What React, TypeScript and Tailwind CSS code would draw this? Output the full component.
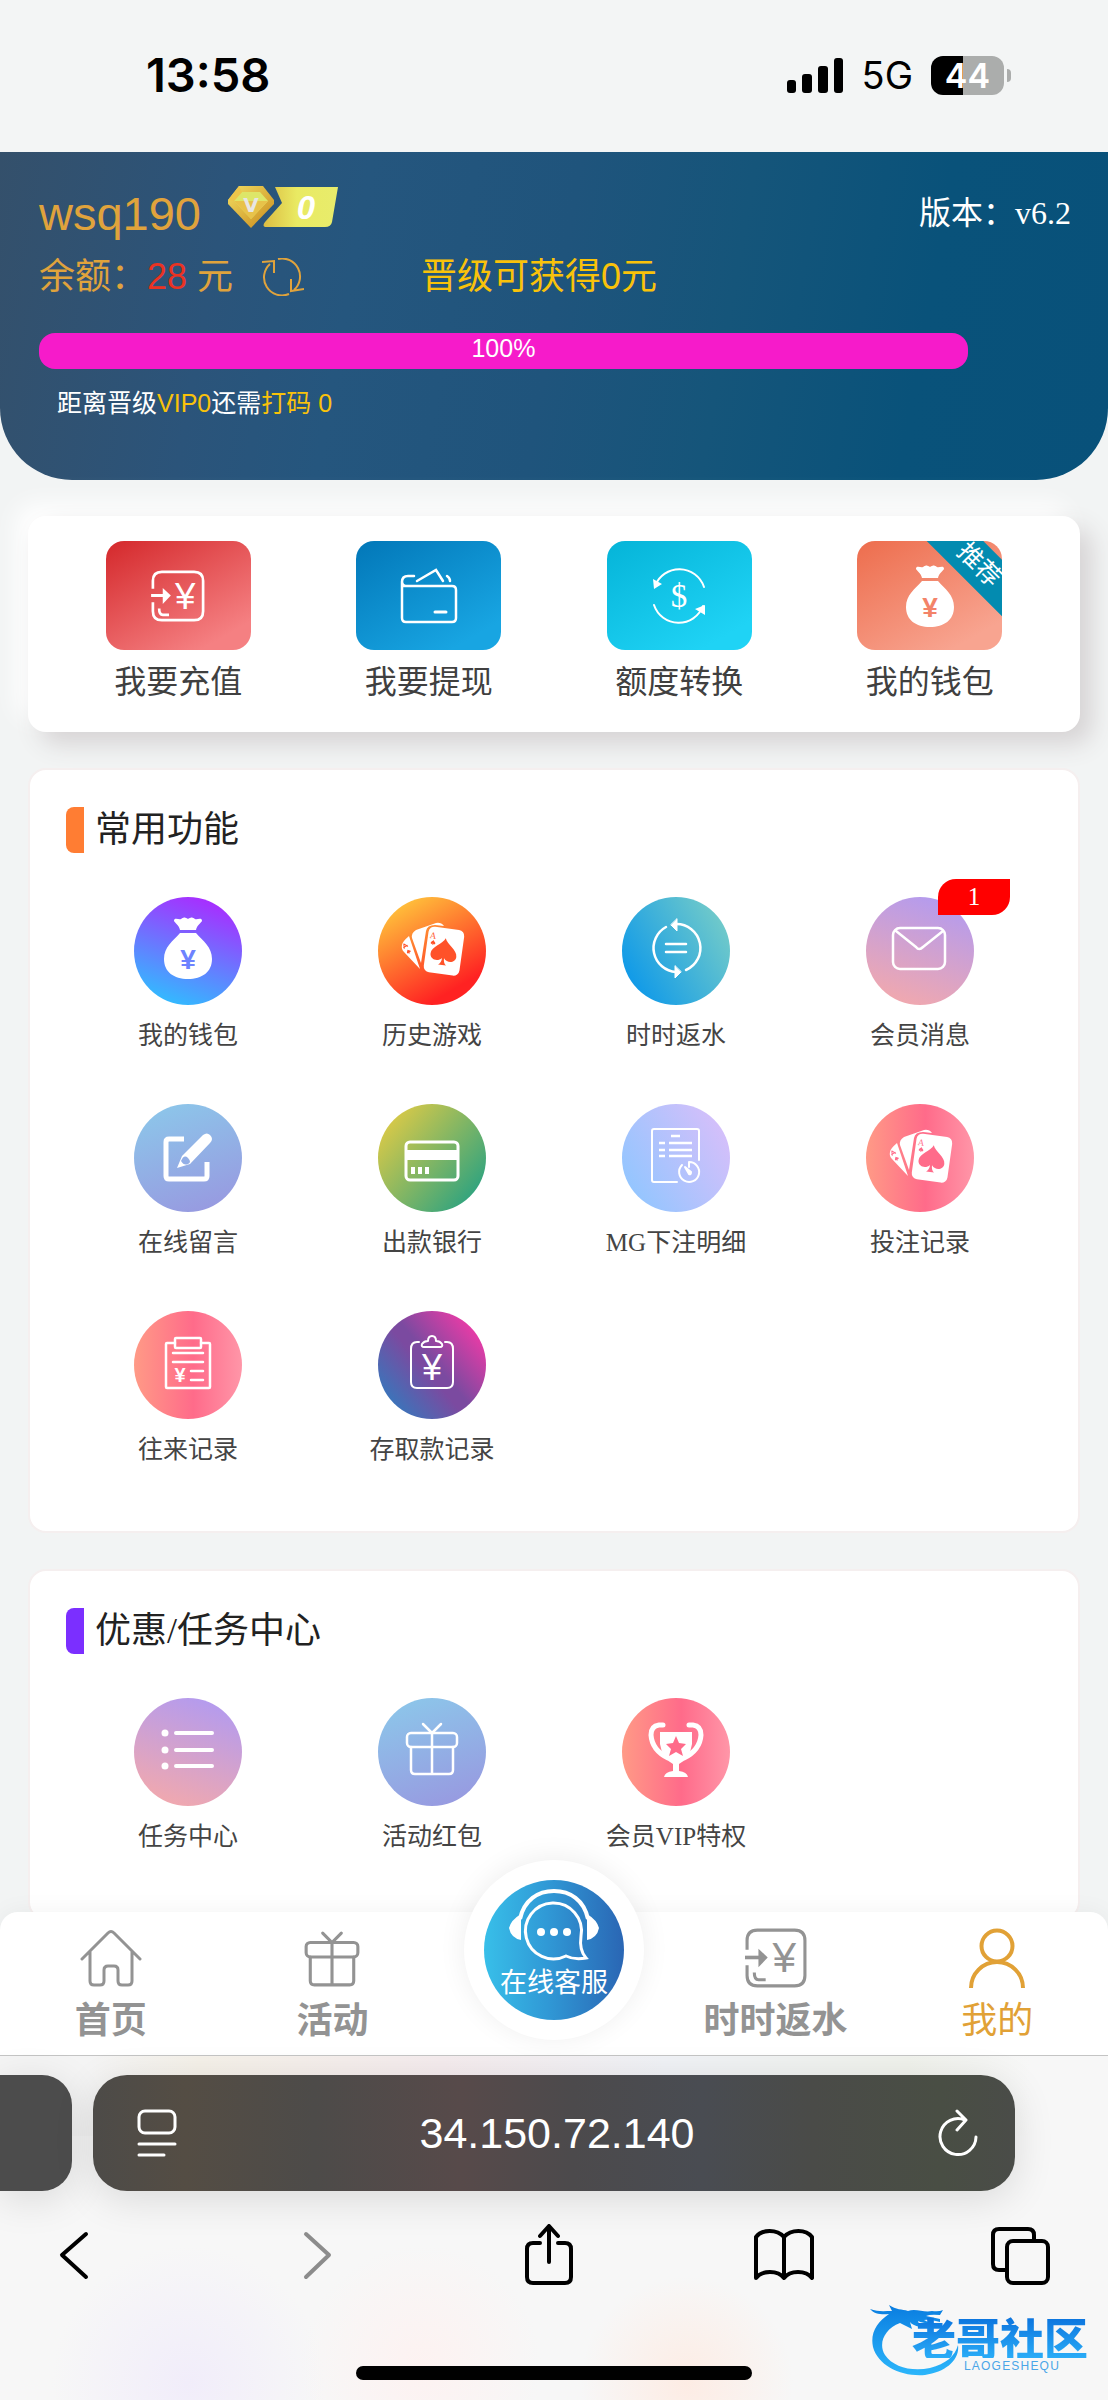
import { ReactNode } from 'react';

interface MenuItem {
  label: string;
  circle: string;
  icon: ReactNode;
  badge?: number;
}

interface ActionItem {
  label: string;
  tile: string;
  icon: ReactNode;
  ribbon?: string;
}

const Bag = ({ ink }: { ink: string }) => (
  <>
    <path
      fill="#fff"
      d="M10 4C10 0 15 3 17 2C19 0 21 0 24 2C27 0 29 0 31 2C33 3 38 0 38 4C37 6 33 8 32 13H16C15 8 11 6 10 4ZM16 16H32C39 24 48 30 48 42C48 55 38 62 24 62S0 55 0 42C0 30 9 24 16 16Z"
    />
    <text x="24" y="52" fontSize="28" fontWeight="700" textAnchor="middle" fill={ink} className="font-['Liberation_Sans',sans-serif]">
      ¥
    </text>
  </>
);

const spade =
  'M0-14C2-8 13-4 13 3C13 9 5 11 1 6C1 9 2 12 4 13H-4C-2 12-1 9-1 6C-5 11-13 9-13 3C-13-4-2-8 0-14Z';

const CircleIcon = ({ children, stroke = 2.5 }: { children: ReactNode; stroke?: number }) => (
  <svg
    viewBox="0 0 108 108"
    className="h-[108px] w-[108px]"
    fill="none"
    stroke="#fff"
    strokeWidth={stroke}
    strokeLinecap="round"
    strokeLinejoin="round"
    aria-hidden="true"
  >
    {children}
  </svg>
);

const BagIcon = ({ ink }: { ink: string }) => (
  <CircleIcon>
    <g transform="translate(30 20)" stroke="none">
      <Bag ink={ink} />
    </g>
  </CircleIcon>
);

const CardsIcon = ({ ink }: { ink: string }) => (
  <CircleIcon>
    <g stroke="none" fill="#fff">
      <path d="M24 48Q24 45 31 39L42 72L26 55Q23 52 24 48Z" />
      <path d="M34 41Q33 36 38 33L58 26Q63 25 66 29L57 28Q49 28 48 34L43 66Z" />
      <g transform="translate(65 54) rotate(8)">
        <rect x="-17" y="-23" width="36" height="46" rx="6" />
        <path d={spade} fill={ink} transform="translate(1 1)" />
        <text x="-12" y="-11" fontSize="9" textAnchor="middle" fill={ink} className="font-['Liberation_Serif',serif]">
          A
        </text>
        <path d={spade} fill={ink} transform="translate(-11 -7) scale(.18)" />
      </g>
      <g transform="translate(29 52) rotate(-32)" fill={ink}>
        <path d="M-2-2L0-6L2-2M-2-3H2" stroke={ink} strokeWidth="1" fill="none" />
        <path d={spade} transform="translate(0 3) scale(.16)" />
      </g>
    </g>
  </CircleIcon>
);

const YenInIcon = ({ className }: { className: string }) => (
  <svg viewBox="0 0 60 58" className={className} fill="none" stroke="currentColor" strokeWidth="3" aria-hidden="true">
    <path d="M2 21V12Q2 2 12 2H48Q58 2 58 12V46Q58 56 48 56H12Q2 56 2 46V36M9 43Q9 50 13 50H20" />
    <path d="M0 28.500H14" strokeWidth="3.500" />
    <path d="M13 20L22 28.500L13 38Z" fill="currentColor" stroke="none" />
    <text
      x="38"
      y="43"
      fontSize="41"
      fontWeight="400"
      textAnchor="middle"
      fill="currentColor"
      stroke="none"
      className="font-['Liberation_Sans',sans-serif]"
    >
      ¥
    </text>
  </svg>
);

const GiftPaths = () => (
  <>
    <rect x="29" y="35" width="50" height="14" rx="4" />
    <path d="M33 49V72Q33 76 37 76H71Q75 76 75 72V49M54 35V76M45 26L54 35L63 26" />
  </>
);

const actions: ActionItem[] = [
  {
    label: '我要充值',
    tile: 'bg-[linear-gradient(150deg,#d4282b,#f58082_85%)]',
    icon: <YenInIcon className="h-[52px] w-[56px] text-white" />,
  },
  {
    label: '我要提现',
    tile: 'bg-[linear-gradient(150deg,#0277b8,#18a5e2_85%)]',
    icon: (
      <svg viewBox="0 0 58 56" className="h-[56px] w-[58px]" fill="none" stroke="#fff" strokeWidth="2.500" strokeLinecap="round" aria-hidden="true">
        <path d="M2 18H52Q56 18 56 22V50Q56 54 52 54H6Q2 54 2 50V14Q2 8 8 8H14M2 13Q2 18 6 18M17 13L36 2L43 13M47 8Q50 10 50 13" />
        <path d="M35 44H46" strokeWidth="3" />
      </svg>
    ),
  },
  {
    label: '额度转换',
    tile: 'bg-[linear-gradient(150deg,#05b4d8,#1fd3f5_85%)]',
    icon: (
      <svg viewBox="0 0 58 58" className="h-[58px] w-[58px]" fill="none" stroke="#fff" strokeWidth="2" strokeLinecap="round" aria-hidden="true">
        <path d="M5 19A26 26 0 0 1 54 20M4 38A26 26 0 0 0 53 39" />
        <path d="M3 12L4 22L12 17ZM55 38V48L45 42Z" fill="#fff" stroke="none" />
        <text x="29" y="40" fontSize="33" textAnchor="middle" fill="#fff" stroke="none" className="font-['Liberation_Serif',serif]">
          $
        </text>
      </svg>
    ),
  },
  {
    label: '我的钱包',
    tile: 'bg-[linear-gradient(150deg,#ed6d4d,#f8a490_85%)]',
    ribbon: '推荐',
    icon: (
      <svg viewBox="0 0 48 62" className="h-[62px] w-[48px]" aria-hidden="true">
        <Bag ink="#f38369" />
      </svg>
    ),
  },
];

const features: MenuItem[] = [
  {
    label: '我的钱包',
    circle: 'bg-[linear-gradient(200deg,#a82dff_10%,#2bc3ff_95%)]',
    icon: <BagIcon ink="#6e82ff" />,
  },
  {
    label: '历史游戏',
    circle: 'bg-[linear-gradient(150deg,#ffc83c_8%,#ff2222_80%)]',
    icon: <CardsIcon ink="#ff5229" />,
  },
  {
    label: '时时返水',
    circle: 'bg-[linear-gradient(60deg,#0a97ea_8%,#73cbc9_90%)]',
    icon: (
      <CircleIcon>
        <path d="M44 30A24 24 0 0 0 54 75M54 27A24 24 0 0 1 64 73" />
        <path d="M44 47H64M44 55H64" />
        <path d="M55 22V34L49 28ZM53 69V81L59 75Z" fill="#fff" strokeWidth="1" />
      </CircleIcon>
    ),
  },
  {
    label: '会员消息',
    circle: 'bg-[linear-gradient(200deg,#b49bee_10%,#f4a9ab_95%)]',
    badge: 1,
    icon: (
      <CircleIcon>
        <rect x="27" y="31" width="52" height="41" rx="7" />
        <path d="M30 34L50 50Q53 54 57 50L77 34" />
      </CircleIcon>
    ),
  },
  {
    label: '在线留言',
    circle: 'bg-[linear-gradient(160deg,#8cc7ea_5%,#9898e0_95%)]',
    icon: (
      <CircleIcon>
        <path d="M50 35H35Q32 35 32 38V72Q32 75 35 75H70Q73 75 73 72V58" strokeWidth="5" strokeLinecap="butt" />
        <path d="M43 64L48 52L69 31Q73 28 76 31Q80 35 76 39L56 60Z" fill="#fff" stroke="none" />
        <path d="M47 57Q50 50 54 54T54 60Q50 62 47 57Z" fill="#92aee6" stroke="none" />
      </CircleIcon>
    ),
  },
  {
    label: '出款银行',
    circle: 'bg-[linear-gradient(130deg,#e1cb45_8%,#2fa37f_88%)]',
    icon: (
      <CircleIcon stroke={3}>
        <rect x="28" y="38" width="52" height="38" rx="4" />
        <path d="M28 46H80V56H28ZM33 63H37V70H33ZM40 63H44V70H40ZM47 63H51V70H47Z" fill="#fff" stroke="none" />
      </CircleIcon>
    ),
  },
  {
    label: 'MG下注明细',
    circle: 'bg-[linear-gradient(60deg,#90c6ff_8%,#d6bffa_90%)]',
    icon: (
      <CircleIcon stroke={2}>
        <path d="M77 56V27Q77 25 75 25H32Q30 25 30 27V76Q30 78 32 78H55" />
        <path d="M49 32H58M37 39H43M47 39H70M37 46H43M47 46H70M37 52H43M47 52H70" strokeWidth="2.500" strokeLinecap="butt" />
        <path d="M60 61A10 10 0 1 0 67 58V63" />
        <path d="M63 63L69 68Q69 71 67 70Z" fill="#fff" />
      </CircleIcon>
    ),
  },
  {
    label: '投注记录',
    circle: 'bg-[linear-gradient(90deg,#ff9a86,#ff6b8a_55%,#ff96a8)]',
    icon: <CardsIcon ink="#ff6b8a" />,
  },
  {
    label: '往来记录',
    circle: 'bg-[linear-gradient(90deg,#ff9a86,#ff6b8a_55%,#ff96a8)]',
    icon: (
      <CircleIcon>
        <path d="M41 32H33Q32 32 32 33V76Q32 77 33 77H75Q76 77 76 76V33Q76 32 75 32H67" />
        <rect x="41" y="27" width="26" height="10" rx="1" />
        <path d="M39 42H69M39 51H69M57 60H69M57 69H69" />
        <text x="46" y="71" fontSize="20" fontWeight="700" textAnchor="middle" fill="#fff" stroke="none" className="font-['Liberation_Sans',sans-serif]">
          ¥
        </text>
      </CircleIcon>
    ),
  },
  {
    label: '存取款记录',
    circle: 'bg-[linear-gradient(50deg,#3479bd_10%,#7b4aa0_45%,#7b4aa0_52%,#e33ca6_85%)]',
    icon: (
      <CircleIcon stroke={2}>
        <path d="M41 31H39Q33 31 33 38V71Q33 77 39 77H69Q75 77 75 71V38Q75 31 69 31H67" />
        <path d="M46 36H62Q65 36 64 33Q62 30 58 30Q58 25 54 25T50 30Q46 30 44 33Q43 36 46 36Z" />
        <text x="54" y="69" fontSize="36" textAnchor="middle" fill="#fff" stroke="none" className="font-['Liberation_Sans',sans-serif]">
          ¥
        </text>
      </CircleIcon>
    ),
  },
];

const promos: MenuItem[] = [
  {
    label: '任务中心',
    circle: 'bg-[linear-gradient(200deg,#b49bee_10%,#f4a9ab_95%)]',
    icon: (
      <CircleIcon>
        <path d="M42 35H78M42 52H78M42 68H78" strokeWidth="4" />
        <g fill="#fff" stroke="none">
          <circle cx="31" cy="35" r="3.500" />
          <circle cx="31" cy="52" r="3.500" />
          <circle cx="31" cy="68" r="3.500" />
        </g>
      </CircleIcon>
    ),
  },
  {
    label: '活动红包',
    circle: 'bg-[linear-gradient(160deg,#8cc7ea_5%,#9898e0_95%)]',
    icon: (
      <CircleIcon>
        <GiftPaths />
      </CircleIcon>
    ),
  },
  {
    label: '会员VIP特权',
    circle: 'bg-[linear-gradient(90deg,#ff9a86,#ff6b8a_55%,#ff96a8)]',
    icon: (
      <CircleIcon>
        <path d="M41 27H37Q29 28 29 37Q30 52 46 60M67 27H71Q79 28 79 37Q78 52 62 60" strokeWidth="5" />
        <path d="M38 34H70V46Q68 60 57 66V73Q65 74 66 79H42Q43 74 51 73V66Q40 60 38 46Z" fill="#fff" stroke="none" />
        <path d="M54 38L57 45L64 46L59 51L61 58L54 54L47 58L49 51L44 46L51 45Z" fill="#ff6b8a" stroke="none" />
      </CircleIcon>
    ),
  },
];

function StatusBar() {
  return (
    <div className="flex items-start justify-between bg-[#f3f5f5] pt-[46px] pr-[97px] pb-[48px] pl-[146px] font-['Inter',sans-serif] text-black">
      <span className="text-[47px] leading-[58px] font-semibold">13:58</span>
      <div className="flex h-[58px] items-center">
        <svg viewBox="0 0 56 35" className="h-[35px] w-[56px]" aria-hidden="true">
          <rect x="0" y="22" width="9" height="13" rx="3" />
          <rect x="15" y="16" width="10" height="19" rx="3" />
          <rect x="31" y="8" width="10" height="27" rx="3" />
          <rect x="47" y="0" width="9" height="35" rx="3" />
        </svg>
        <span className="ml-[19px] text-[38px] leading-[58px]">5G</span>
        <div className="ml-[18px] flex items-center gap-[3px]">
          <span className="flex h-[39px] w-[73px] items-center justify-center rounded-[12px] bg-[linear-gradient(90deg,#000_44%,#abadac_44%)] text-[34px] leading-[39px] font-semibold text-white">
            44
          </span>
          <span className="h-[13px] w-[4px] rounded-r-full bg-[#abadac]" />
        </div>
      </div>
    </div>
  );
}

function VipBadge() {
  return (
    <svg viewBox="0 0 112 43" className="h-[43px] w-[112px]" role="img" aria-label="VIP 0">
      <defs>
        <linearGradient id="vipPlate" x1="0" y1="0" x2="1" y2="0">
          <stop offset="0" stopColor="#dcbc42" />
          <stop offset=".45" stopColor="#e9ea63" />
          <stop offset="1" stopColor="#e8ec6c" />
        </linearGradient>
        <linearGradient id="vipGem" x1="0" y1="0" x2="1" y2="1">
          <stop offset="0" stopColor="#f1dd62" />
          <stop offset="1" stopColor="#c98a1c" />
        </linearGradient>
      </defs>
      <path d="M47 1H110L104 36Q103 41 97 41H37Q34 40 37 36L54 17Z" fill="url(#vipPlate)" />
      <path d="M11 0H35L46 14V18L23 42L0 18V14Z" fill="url(#vipGem)" />
      <path d="M14 6H32L40 15L23 33L6 15Z" fill="#dde668" />
      <path d="M40 15L23 33L6 15Z" fill="#e8c24a" />
      <path d="M11 0L14 6L6 15L0 14Z" fill="#edc64b" />
      <text x="23" y="26" fontSize="20" fontWeight="700" textAnchor="middle" fill="#e8e6e4" className="font-['DejaVu_Sans',sans-serif]">
        V
      </text>
      <text x="78" y="33" fontSize="33" fontWeight="700" fontStyle="italic" textAnchor="middle" fill="#fff" className="font-['Liberation_Sans',sans-serif]">
        0
      </text>
    </svg>
  );
}

function ProfileHeader() {
  return (
    <header className="rounded-b-[72px] bg-[linear-gradient(100deg,#34506b,#2b547a_20%,#25567e_32%,#1f547c_50%,#15557a_65%,#09527a_82%,#08517a)] pt-[34px] pr-[37px] pb-[59px] pl-[39px] font-['Liberation_Sans','Noto_Sans_CJK_SC',sans-serif]">
      <div className="flex items-start">
        <h1 className="text-[47px] leading-[56px] text-[#e0a33c]">wsq190</h1>
        <div className="ml-[27px]">
          <VipBadge />
        </div>
        <span className="ml-auto font-['Liberation_Serif','Noto_Sans_CJK_SC',serif] text-[32px] leading-[54px] text-white">
          版本：v6.2
        </span>
      </div>

      <div className="mt-[11px] flex items-center text-[36px] leading-[48px] text-[#e0a33c]">
        <p>
          余额：<span className="text-[#ea3323]">28</span> 元
        </p>
        <button type="button" aria-label="刷新余额" className="ml-[29px]">
          <svg viewBox="0 0 42 38" className="h-[38px] w-[42px]" fill="none" stroke="currentColor" strokeWidth="2" aria-hidden="true">
            <path d="M16 1A18 18 0 0 1 32 32M27 36A18 18 0 0 1 8 6M0 4L12 3V15M29 21V33L42 31" />
          </svg>
        </button>
        <p className="ml-[117px] text-[#f9c20a]">晋级可获得0元</p>
      </div>

      <div
        role="progressbar"
        aria-label="晋级进度"
        aria-valuenow={100}
        className="mt-[32px] h-9 w-9/10 rounded-[16px] bg-[#f61bca] text-center text-[25px] leading-[30px] text-white"
      >
        100%
      </div>

      <p className="mt-4 pl-[18px] text-[25px] leading-9 text-white">
        距离晋级<span className="text-[#f9c20a]">VIP0</span>还需<span className="text-[#f9c20a]">打码 0</span>
      </p>
    </header>
  );
}

function QuickActions() {
  return (
    <nav className="mx-7 mt-9 grid grid-cols-4 rounded-[18px] bg-white px-[25px] pt-[25px] pb-8 shadow-[12px_12px_24px_#d6d3d4,-12px_-12px_24px_#ffffff]">
      {actions.map((item) => (
        <a key={item.label} href="#" className="flex flex-col items-center">
          <div className={`relative flex h-[109px] w-[145px] items-center justify-center overflow-hidden rounded-[18px] ${item.tile}`}>
            {item.icon}
            {item.ribbon && (
              <span className="absolute top-[4px] left-[52px] w-[140px] rotate-45 bg-[#038bb0] text-center text-[25px] leading-10 text-white">
                {item.ribbon}
              </span>
            )}
          </div>
          <span className="mt-[14px] text-[32px] leading-9 text-[#404040]">{item.label}</span>
        </a>
      ))}
    </nav>
  );
}

function MenuSection({ title, accent, items }: { title: string; accent: string; items: MenuItem[] }) {
  return (
    <section className="mx-7 mt-9 rounded-[18px] border-2 border-[#f5efef] bg-white px-9 pt-[37px] pb-[13px]">
      <div className="flex items-center gap-[11px]">
        <span className={`h-[46px] w-[18px] rounded-l-[8px] ${accent}`} />
        <h2 className="text-[36px] leading-[46px] text-[#222]">{title}</h2>
      </div>
      <div className="mt-11 grid grid-cols-4">
        {items.map((item) => (
          <a key={item.label} href="#" className="flex flex-col items-center pb-[49px]">
            <div className={`relative rounded-full ${item.circle}`}>
              {item.icon}
              {item.badge && (
                <span className="absolute -top-[18px] left-[72px] h-9 w-[72px] rounded-tl-[18px] rounded-br-[18px] bg-[#ff0000] text-center text-[25px] leading-9 text-white">
                  {item.badge}
                </span>
              )}
            </div>
            <span className="mt-3 text-[25px] leading-[38px] text-[#444]">{item.label}</span>
          </a>
        ))}
      </div>
    </section>
  );
}

function TabLink({ label, active, children }: { label: string; active?: boolean; children: ReactNode }) {
  return (
    <a
      href="#"
      className={`flex flex-col items-center pt-4 pb-4 ${active ? 'font-normal text-[#e1a136]' : 'font-bold text-[#939393]'}`}
    >
      {children}
      <span className="mt-[7px] text-[36px] leading-[44px]">{label}</span>
    </a>
  );
}

function TabBar() {
  return (
    <nav className="relative -mt-2 grid grid-cols-5 items-start rounded-t-[18px] bg-white font-['Noto_Sans_CJK_SC',sans-serif] shadow-[0_0_24px_rgba(0,0,0,0.05)]">
      <TabLink label="首页">
        <svg viewBox="0 0 62 60" className="h-[60px] w-[62px]" fill="none" stroke="currentColor" strokeWidth="3" strokeLinecap="round" aria-hidden="true">
          <path d="M2 31L28 5Q31 2 34 5L60 31M10 24V53Q10 57 14 57H20Q24 57 24 53V42Q24 38 28 38H34Q38 38 38 42V53Q38 57 42 57H48Q52 57 52 53V24" />
        </svg>
      </TabLink>
      <TabLink label="活动">
        <svg viewBox="25 21 58 58" className="h-[60px] w-[60px]" fill="none" stroke="currentColor" strokeWidth="3" strokeLinecap="round" aria-hidden="true">
          <GiftPaths />
        </svg>
      </TabLink>
      <a
        href="#"
        className="-mt-[52px] flex h-[180px] w-[180px] items-center justify-center justify-self-center rounded-full bg-white shadow-[0_-2px_28px_rgba(0,0,0,0.07)]"
      >
        <div className="flex h-[140px] w-[140px] flex-col items-center rounded-full bg-[linear-gradient(90deg,#38bfe9,#3099d6_45%,#2a66b4)]">
          <svg viewBox="0 0 140 84" className="h-[84px] w-[140px]" fill="none" stroke="#fff" strokeWidth="3" aria-hidden="true">
            <path d="M36 39C40 20 54 11 70 11S100 20 104 39" strokeWidth="4" />
            <path d="M37 34Q27 40 25 48Q27 58 37 60ZM103 34Q113 40 115 48Q113 58 103 60Z" fill="#fff" stroke="none" />
            <path d="M97 56A28 28 0 1 0 82 76Q90 80 102 78Q95 70 97 56Z" />
            <g fill="#fff" stroke="none">
              <circle cx="57" cy="52" r="4" />
              <circle cx="70" cy="52" r="4" />
              <circle cx="83" cy="52" r="4" />
            </g>
          </svg>
          <span className="text-[27px] leading-[34px] whitespace-nowrap text-white">在线客服</span>
        </div>
      </a>
      <TabLink label="时时返水">
        <YenInIcon className="h-[60px] w-[62px]" />
      </TabLink>
      <TabLink label="我的" active>
        <svg viewBox="0 0 62 60" className="h-[60px] w-[62px]" fill="none" stroke="currentColor" strokeWidth="4" aria-hidden="true">
          <circle cx="31" cy="18" r="15.500" />
          <path d="M5 60A26 26 0 0 1 57 60" />
        </svg>
      </TabLink>
    </nav>
  );
}

const ToolButton = ({ label, className, children }: { label: string; className?: string; children: ReactNode }) => (
  <button type="button" aria-label={label} className={className}>
    <svg
      viewBox="0 0 62 62"
      className="h-[62px] w-[62px]"
      fill="none"
      stroke="currentColor"
      strokeWidth="4"
      strokeLinecap="round"
      strokeLinejoin="round"
      aria-hidden="true"
    >
      {children}
    </svg>
  </button>
);

function SiteLogo() {
  return (
    <div className="absolute right-4 bottom-[24px] h-[74px] w-[222px]" lang="zh-CN">
      <svg viewBox="0 0 222 74" className="h-[74px] w-[222px]" aria-hidden="true">
        <defs>
          <linearGradient id="dragon" x1="0" y1="0" x2="0" y2="1">
            <stop offset="0" stopColor="#0a7de0" />
            <stop offset="1" stopColor="#2cb6fb" />
          </linearGradient>
        </defs>
        <path
          fill="url(#dragon)"
          d="M0 7C8 10 14 9 22 9L19 3C26 8 32 7 38 9C46 6 54 11 62 9Q69 10 73 8L70 13Q60 12 56 14L70 17V20Q58 17 54 18L62 22Q52 21 48 19L50 25Q42 23 40 20L42 27L30 21C14 27 8 42 15 53C23 65 42 70 60 66C76 62 85 54 88 43C90 58 76 70 55 73C32 75 8 64 3 45C0 31 7 20 19 12C12 13 4 12 0 7Z"
        />
      </svg>
      <span className="absolute top-[14px] left-[42px] bg-[linear-gradient(180deg,#0b72dd,#2aacf7)] bg-clip-text font-['Noto_Sans_CJK_SC',sans-serif] text-[44px] leading-[42px] font-black whitespace-nowrap text-transparent">
        老哥社区
      </span>
      <span className="absolute top-[58px] left-[94px] font-['Liberation_Sans',sans-serif] text-[12px] leading-[12px] tracking-widest text-[#4aa6e8]">
        LAOGESHEQU
      </span>
    </div>
  );
}

function BrowserBar() {
  return (
    <footer className="relative border-t border-[#c4c4c4] bg-[#f7f7f7] bg-[radial-gradient(circle_at_17%_95%,#f1edfa,transparent_14%),radial-gradient(circle_at_38%_90%,#fdf2f1,transparent_16%),radial-gradient(circle_at_62%_95%,#fdece4,transparent_14%),linear-gradient(90deg,#f4f4f4_8%,#f5f1e9_18%,#f5ecee_40%,#f0f2f6_60%,#f0f2ec_82%,#f7f7f7_93%)] bg-[length:auto,auto,auto,100%_80px] bg-no-repeat pt-[19px]">
      <div className="flex gap-[21px] pr-[93px]">
        <div className="h-[116px] w-[72px] rounded-r-[30px] bg-[#4c4c4c] shadow-[0_8px_40px_rgba(0,0,0,0.12)]" />
        <div className="flex h-[116px] min-w-0 flex-1 items-center rounded-[34px] bg-[linear-gradient(90deg,#4d4b48,#544d44_10%,#4d4b49_24%,#574a4a_40%,#4c4a4c_52%,#494c52_66%,#4a4b48_78%,#494e44_92%,#4a4c48)] pr-9 pl-11 text-white shadow-[0_8px_40px_rgba(0,0,0,0.12)]">
          <button type="button" aria-label="页面菜单">
            <svg viewBox="0 0 40 48" className="h-[48px] w-[40px]" fill="none" stroke="currentColor" strokeWidth="3" strokeLinecap="round" aria-hidden="true">
              <rect x="2" y="2" width="36" height="22" rx="6" />
              <path d="M2 35H38M2 46H27" />
            </svg>
          </button>
          <input
            type="text"
            aria-label="网址"
            defaultValue="34.150.72.140"
            className="min-w-0 flex-1 bg-transparent text-center font-['Liberation_Sans',sans-serif] text-[43px] leading-[50px] text-white outline-none"
          />
          <button type="button" aria-label="重新载入">
            <svg viewBox="0 0 42 48" className="h-[48px] w-[42px]" fill="none" stroke="currentColor" strokeWidth="3" strokeLinecap="round" strokeLinejoin="round" aria-hidden="true">
              <path d="M28 11A18 18 0 1 0 39 28M20 2L29 11L20 21" />
            </svg>
          </button>
        </div>
      </div>

      <div className="mt-[33px] flex justify-between pr-[57px] pl-[43px] text-black">
        <ToolButton label="后退">
          <path d="M43 10L19 31L43 53" />
        </ToolButton>
        <ToolButton label="前进" className="text-[#8c8c8c]">
          <path d="M26 10L49 31L26 53" />
        </ToolButton>
        <ToolButton label="分享">
          <path d="M24 19H17Q11 19 11 25V53Q11 59 17 59H49Q55 59 55 53V25Q55 19 49 19H42M33 3V38M24 12L33 2L42 12" />
        </ToolButton>
        <ToolButton label="书签">
          <path d="M31 13C24 5 9 5 3 13V54C9 46 25 46 31 54C37 46 53 46 59 54V13C53 5 38 5 31 13V54" />
        </ToolButton>
        <ToolButton label="标签页">
          <path d="M17 46H10Q4 46 4 40V11Q4 5 10 5H39Q45 5 45 11V16" />
          <rect x="18" y="17" width="41" height="42" rx="6" />
        </ToolButton>
      </div>

      <div className="mx-auto mt-[80px] h-[14px] w-[396px] rounded-full bg-black" />
      <div className="h-5" />
      <SiteLogo />
    </footer>
  );
}

export default function App() {
  return (
    <div lang="zh-CN" className="w-full overflow-hidden bg-[#f2f4f4]">
      <StatusBar />
      <ProfileHeader />
      <main className="font-['Liberation_Serif','Noto_Sans_CJK_SC',serif]">
        <QuickActions />
        <MenuSection title="常用功能" accent="bg-[#ff7d33]" items={features} />
        <MenuSection title="优惠/任务中心" accent="bg-[#7b2fff]" items={promos} />
      </main>
      <TabBar />
      <BrowserBar />
    </div>
  );
}
